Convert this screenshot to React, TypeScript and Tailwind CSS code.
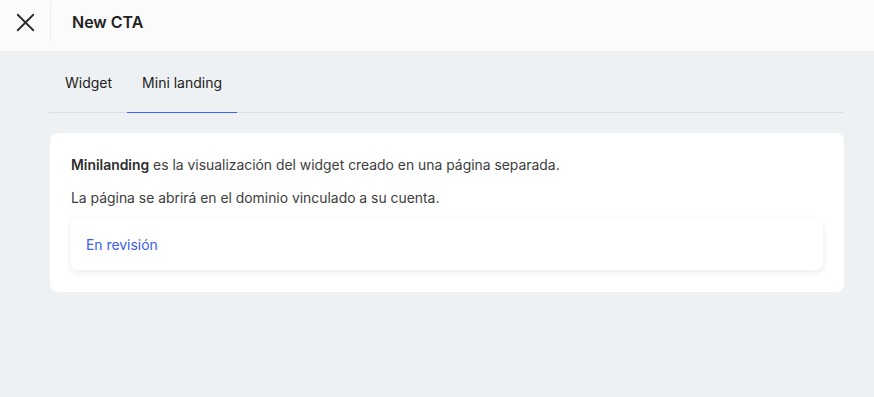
import { X } from "lucide-react";

function Header() {
  return (
    <div className="h-[51px] bg-[#fbfbfb]">
      <div className="flex h-[44px] items-center">
        <div className="flex h-[40px] w-[51px] items-center justify-center border-r border-[#ececec]">
          <X size={31} strokeWidth={1.4} className="text-[#2a2a2a]" />
        </div>
        <p className="pl-[21px] text-[16px] font-semibold text-[#222]">New CTA</p>
      </div>
    </div>
  );
}

function Tabs() {
  return (
    <div className="flex border-b border-[#dcdee0]">
      <button className="flex h-[61px] items-center pl-4 pr-[15px] pt-[2px] text-[14px] text-[#222]">Widget</button>
      <button className="-mb-px flex h-[62px] items-center border-b border-[#3d63f5] px-[15px] pt-[2px] text-[14px] text-[#222]">
        Mini landing
      </button>
    </div>
  );
}

export default function App() {
  return (
    <div className="min-h-[397px] bg-[#eef1f3] font-['Inter',sans-serif]">
      <Header />
      <div className="ml-[49px] mr-[30px]">
        <Tabs />
        <div className="ml-px mt-5 rounded-lg bg-white px-[21px] pb-[22px] pt-[22px] text-[13.9px] text-[#3d3d3d]">
          <p className="leading-5">
            <span className="font-semibold text-[#2e2e2e]">Minilanding</span> es la visualización del widget creado en una página separada.
          </p>
          <p className="mt-[13px] leading-5">La página se abrirá en el dominio vinculado a su cuenta.</p>
          <div className="mt-[11px] flex h-[51px] items-center rounded-md bg-white px-[15px] pt-px shadow-[0_2px_6px_rgba(60,80,120,0.12)]">
            <span className="text-[#3b5cf6]">En revisión</span>
          </div>
        </div>
      </div>
    </div>
  );
}
